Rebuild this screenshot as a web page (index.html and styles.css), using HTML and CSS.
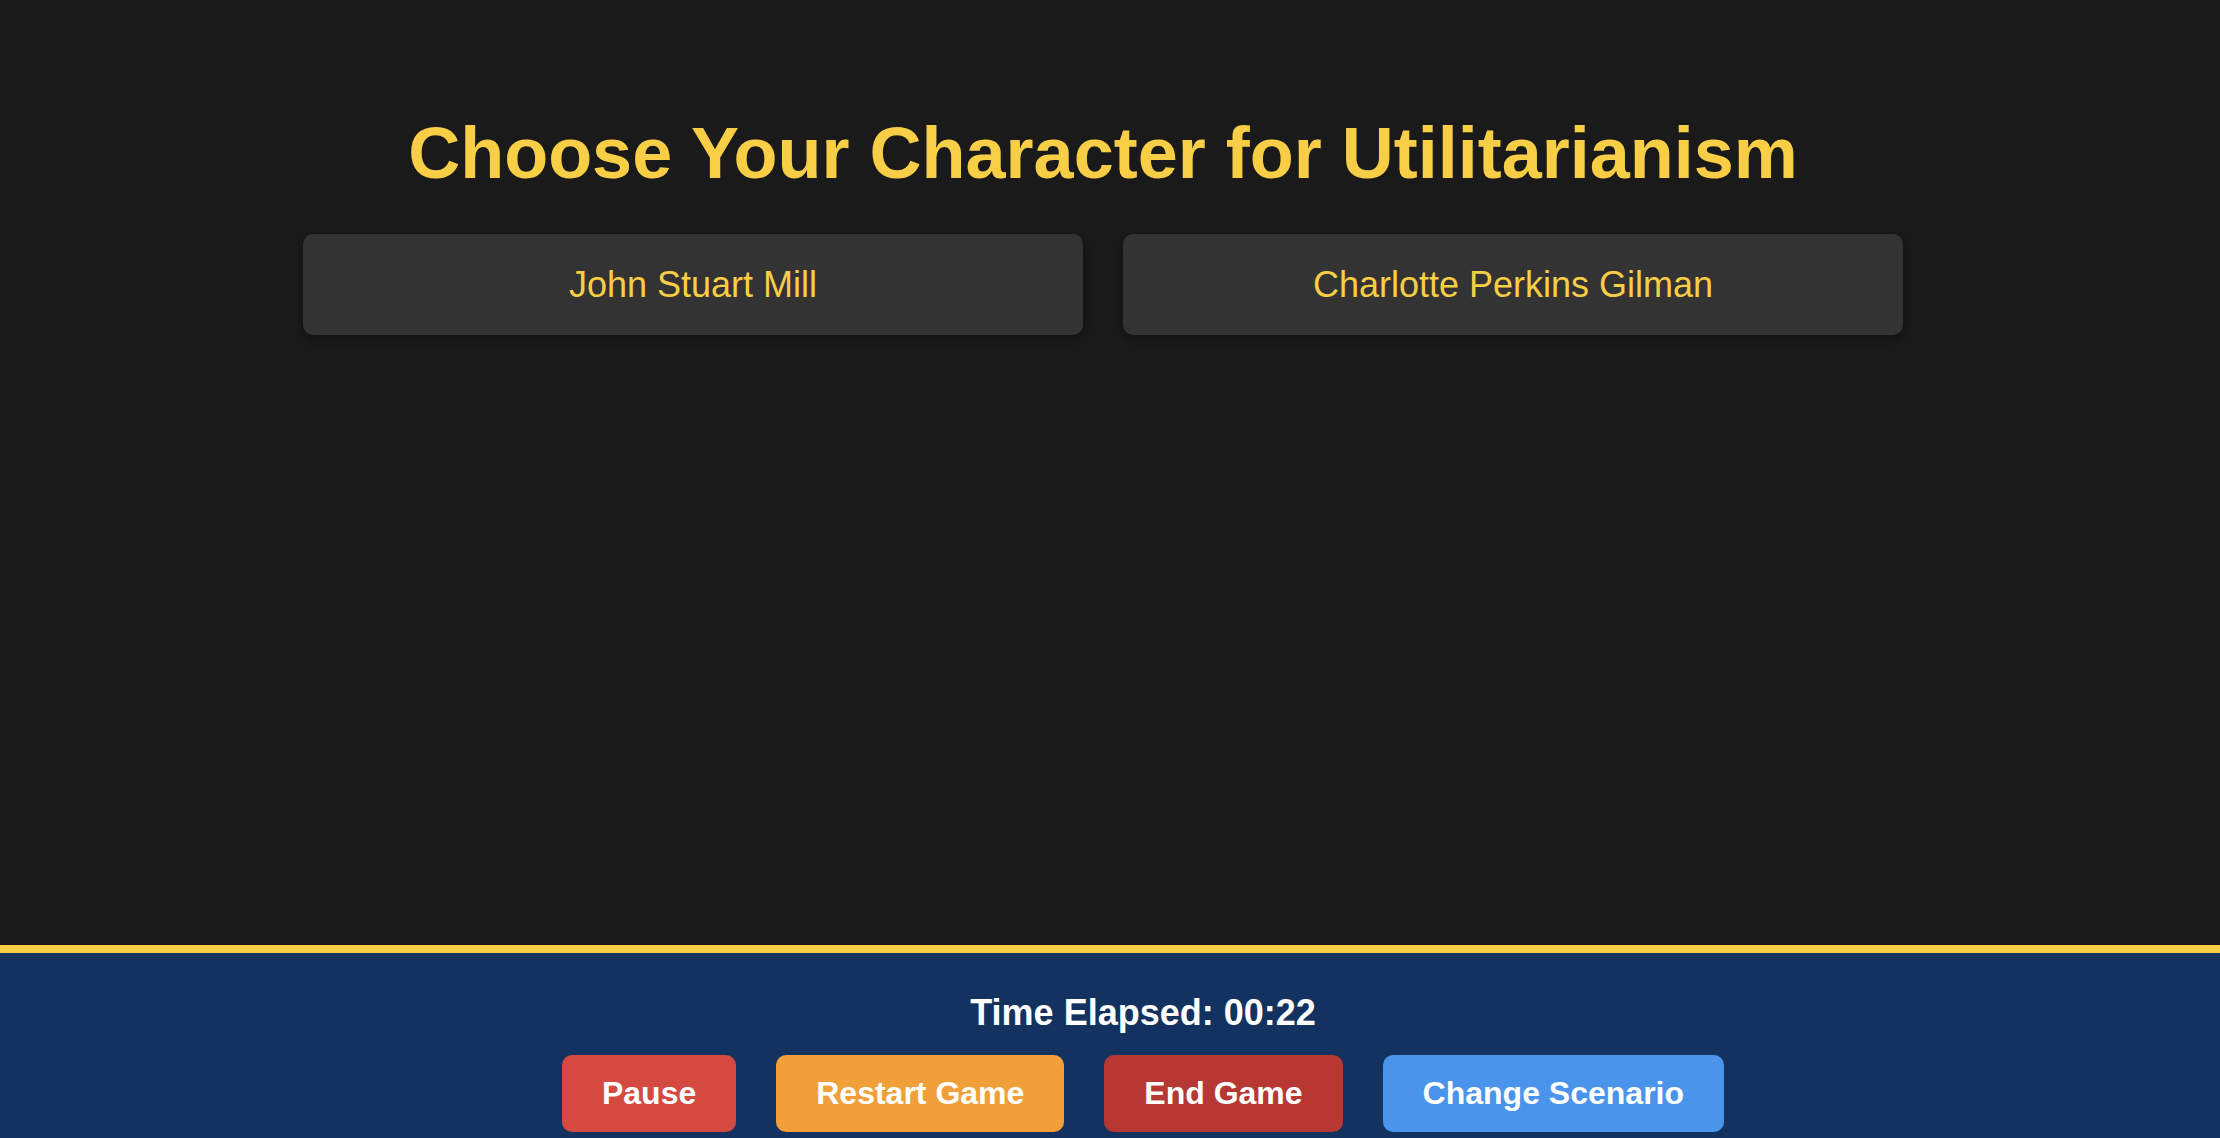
FILE: index.html
```html
<!DOCTYPE html>
<html lang="en">
<head>
<meta charset="utf-8">
<title>Choose Your Character</title>
<link rel="stylesheet" href="styles.css">
</head>
<body>
<div class="page">
  <main class="main">
    <div class="container">
      <h1 class="title">Choose Your Character for Utilitarianism</h1>
      <div class="characters">
        <button class="character">John Stuart Mill</button>
        <button class="character">Charlotte Perkins Gilman</button>
      </div>
    </div>
  </main>
  <footer class="footer">
    <div class="timer">Time Elapsed: 00:22</div>
    <div class="controls">
      <button class="btn btn-pause">Pause</button>
      <button class="btn btn-restart">Restart Game</button>
      <button class="btn btn-end">End Game</button>
      <button class="btn btn-change">Change Scenario</button>
    </div>
  </footer>
</div>
</body>
</html>
```

FILE: styles.css
```css
* { box-sizing: border-box; }
html, body {
  margin: 0;
  padding: 0;
  height: 100%;
  overflow: hidden;
  background: #1a1a1a;
  font-family: "Liberation Sans", Arial, Helvetica, sans-serif;
}
.page {
  display: flex;
  flex-direction: column;
  height: 100%;
}
.main {
  height: 945px;
  flex: none;
  padding: 110px 14px 0 0;
}
.container {
  width: 1600px;
  margin: 0 auto;
  display: flex;
  flex-direction: column;
  align-items: center;
}
.title {
  margin: 0 0 38px 0;
  font-size: 72px;
  line-height: 86px;
  font-weight: 700;
  color: #f8ce46;
  text-align: center;
  white-space: nowrap;
}
.characters {
  display: grid;
  grid-template-columns: 1fr 1fr;
  gap: 40px;
  width: 100%;
}
.character {
  background: #333333;
  border: none;
  border-radius: 10px;
  padding: 30px 20px;
  font-family: inherit;
  font-size: 36px;
  line-height: 41px;
  color: #f8ce46;
  text-align: center;
  box-shadow: 0 4px 10px rgba(0, 0, 0, 0.35);
  cursor: pointer;
}
.footer {
  flex: none;
  background: #13325f;
  border-top: 8px solid #f6cd45;
  padding: 39px 0 40px 66px;
  display: flex;
  flex-direction: column;
  align-items: center;
}
.timer {
  color: #ffffff;
  font-size: 36px;
  font-weight: 700;
  line-height: 41px;
  margin-bottom: 22px;
}
.controls {
  display: flex;
  gap: 40px;
  justify-content: center;
}
.btn {
  border: none;
  border-radius: 10px;
  padding: 20px 40px;
  font-family: inherit;
  font-size: 32px;
  line-height: 37px;
  font-weight: 700;
  color: #ffffff;
  cursor: pointer;
}
.btn-pause { background: #d44a40; }
.btn-restart { background: #f09f39; }
.btn-end { background: #b73832; }
.btn-change { background: #4a95eb; }
```
